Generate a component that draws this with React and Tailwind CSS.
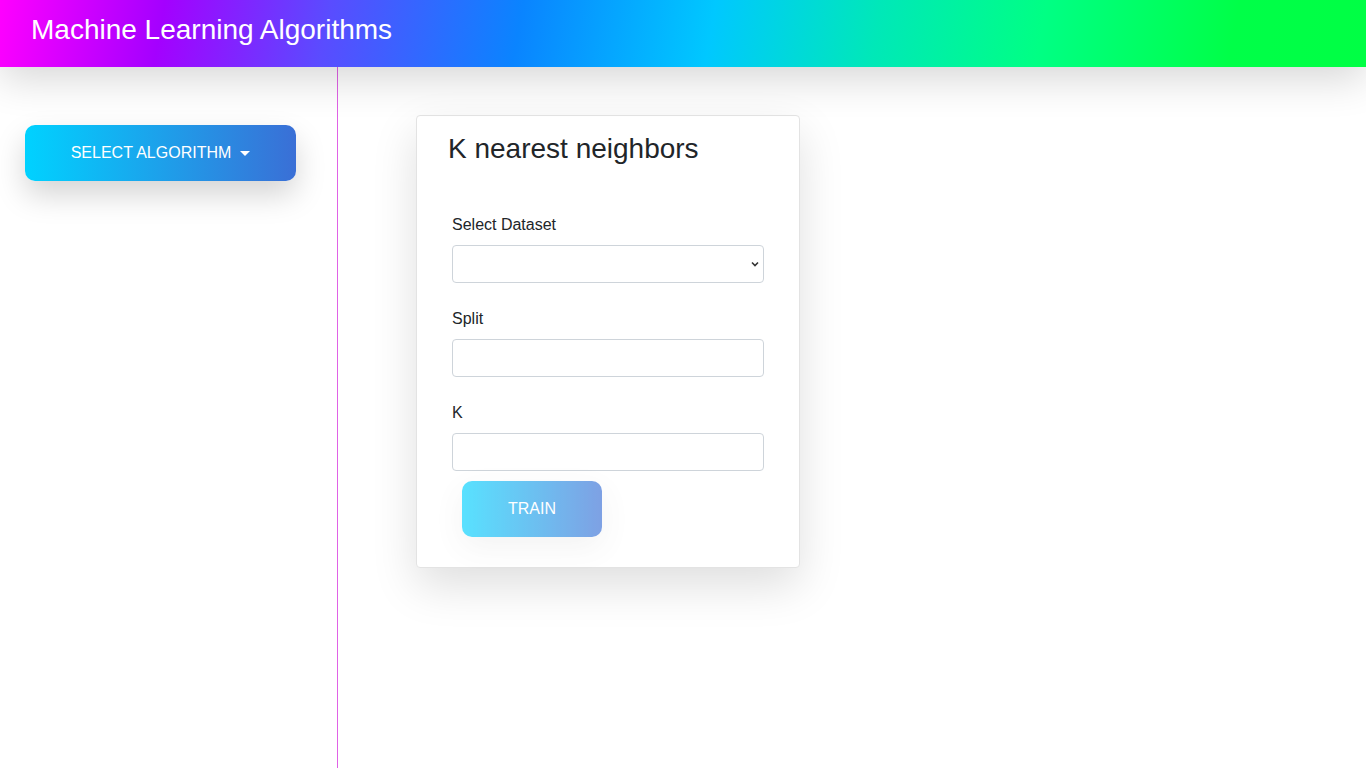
import React from "react";

export default function App() {
  return (
    <div className="min-h-screen bg-white font-['Liberation_Sans',Arial,sans-serif] text-[#212529]">
      <header className="relative z-10 flex h-[67px] items-center bg-[linear-gradient(100deg,#ff00ff_0%,#a400ff_12%,#5a4cff_24%,#0a84ff_38%,#00c8ff_52%,#00e8b8_64%,#00ff84_76%,#00ff48_90%,#00ff44_100%)] px-[31px] pb-[8px] shadow-[0_12px_40px_rgba(0,0,0,0.16)]">
        <h1 className="text-[28px] leading-[1.2] text-white">Machine Learning Algorithms</h1>
      </header>

      <div className="flex min-h-[768px]">
        {/* sidebar */}
        <aside className="w-[338px] shrink-0 border-r border-[#e062e6] px-[25px] pt-[58px]">
          <button className="flex h-[56px] w-[271px] items-center justify-center gap-[9px] rounded-[10px] bg-[linear-gradient(to_right,#00d2ff,#3a6fd6)] text-[16px] text-white shadow-[0_14px_30px_rgba(0,0,0,0.17)]">
            <span>SELECT ALGORITHM</span>
            <span className="mt-[1px] h-0 w-0 border-x-[5px] border-t-[5px] border-x-transparent border-t-white" />
          </button>
        </aside>

        {/* main */}
        <main className="flex-1 pl-[78px] pt-[48px]">
          <div className="w-[384px] rounded-[4px] border border-[#e3e3e3] bg-white pb-[30px] shadow-[0_18px_45px_rgba(0,0,0,0.13)]">
            <h3 className="pl-[31px] pt-[16px] text-[28px] leading-[1.2]">K nearest neighbors</h3>

            <form className="mt-[47px] px-[35px]" onSubmit={(e) => e.preventDefault()}>
              <label className="block text-[16px] leading-[24px]">Select Dataset</label>
              <div className="relative mt-[8px]">
                <select className="block h-[38px] w-full appearance-none rounded-[4px] border border-[#ced4da] bg-white px-3 text-[16px]">
                  <option value=""></option>
                </select>
                <svg className="pointer-events-none absolute right-[4px] top-[14px]" width="10" height="10" viewBox="0 0 10 10">
                  <path d="M2 3.5 L5 6.5 L8 3.5" fill="none" stroke="#333" strokeWidth="1.6" />
                </svg>
              </div>

              <label className="mt-[24px] block text-[16px] leading-[24px]">Split</label>
              <input className="mt-[8px] block h-[38px] w-full rounded-[4px] border border-[#ced4da] px-3 text-[16px]" />

              <label className="mt-[24px] block text-[16px] leading-[24px]">K</label>
              <input className="mt-[8px] block h-[38px] w-full rounded-[4px] border border-[#ced4da] px-3 text-[16px]" />

              <button className="ml-[10px] mt-[10px] flex h-[56px] w-[140px] items-center justify-center rounded-[10px] bg-[linear-gradient(to_right,#00d2ff,#3a6fd6)] text-[16px] text-white opacity-65 shadow-[0_10px_30px_rgba(0,0,0,0.07)]">
                TRAIN
              </button>
            </form>
          </div>
        </main>
      </div>
    </div>
  );
}
